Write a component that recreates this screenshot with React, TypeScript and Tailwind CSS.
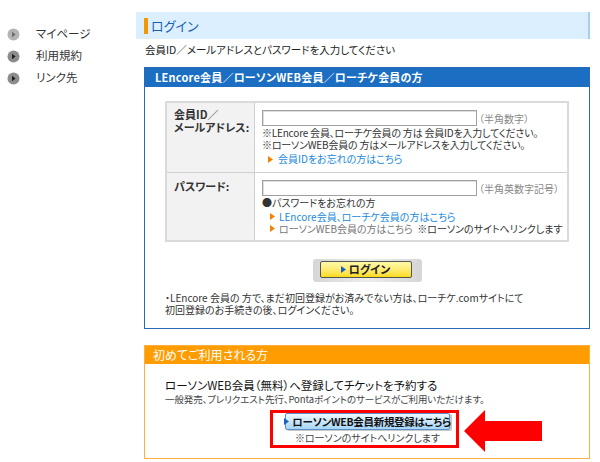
function Bullet({ light }: { light?: boolean }) {
  return (
    <svg width="13" height="13" viewBox="0 0 13 13">
      <circle cx="6.5" cy="6.5" r="6" fill={light ? '#b4b4b4' : '#8c8c8c'} />
      <path d="M5 3.8 L8.6 6.5 L5 9.2 Z" fill={light ? '#6a6a6a' : '#1e1e1e'} />
    </svg>
  );
}

function Tri({ color = '#f08300' }: { color?: string }) {
  return (
    <svg width="5" height="7" viewBox="0 0 5 7" className="shrink-0">
      <path d="M0 0 L5 3.5 L0 7 Z" fill={color} />
    </svg>
  );
}

function Sidebar() {
  const items = ['マイページ', '利用規約', 'リンク先'];
  return (
    <aside className="w-[136px] shrink-0 pl-[7px] pt-[23px]">
      {items.map((t, i) => (
        <div key={t} className="flex h-[22px] items-center gap-[16px] text-[11.5px] text-[#333]">
          <Bullet light={i === 0} />
          <span>{t}</span>
        </div>
      ))}
    </aside>
  );
}

function TextInput() {
  return <div className="h-[16px] w-[215px] border border-[#a0a0a0] bg-white shadow-[inset_1px_1px_0_#ddd]" />;
}

function LoginBox() {
  return (
    <section className="mt-[10px] border border-[#2a6ab8]">
      <div className="flex h-[19px] items-center bg-[#1b6ec2] pl-[10px] text-[11px] font-bold tracking-[0.2px] text-white">
        LEncore会員／ローソンWEB会員／ローチケ会員の方
      </div>
      <div className="px-[20px] pb-[12px] pt-[14px]">
        <div className="border-2 border-[#dadada]">
          <div className="grid h-[70px] grid-cols-[88px_1fr] border-b border-[#d0d0d0]">
            <div className="border-r border-[#d0d0d0] bg-[#f2f2f2] pl-[7px] pt-[5px] text-[11px] font-bold leading-[13px] text-[#333]">
              <div>会員ID／</div>
              <div>メールアドレス:</div>
            </div>
            <div className="pl-[7px] pt-[7px]">
              <div className="flex items-center">
                <TextInput />
                <span className="ml-[2px] text-[10px] text-[#888]">（半角数字）</span>
              </div>
              <div className="mt-[1px] text-[10px] leading-[12px] tracking-[-0.2px] text-[#333]">
                <div>※LEncore 会員、ローチケ会員の 方は 会員IDを入力してください。</div>
                <div>※ローソンWEB会員の 方はメールアドレスを入力してください。</div>
              </div>
              <div className="mt-[2px] flex items-center gap-[5px] pl-[6px] text-[10px] leading-[12px] text-[#1a8ae0]">
                <Tri />
                <span>会員IDをお忘れの方はこちら</span>
              </div>
            </div>
          </div>
          <div className="grid h-[67px] grid-cols-[88px_1fr]">
            <div className="border-r border-[#d0d0d0] bg-[#f2f2f2] pl-[7px] pt-[7px] text-[11px] font-bold leading-[12px] text-[#333]">
              パスワード:
            </div>
            <div className="pl-[7px] pt-[7px]">
              <div className="flex items-center">
                <TextInput />
                <span className="ml-[2px] text-[10px] text-[#888]">（半角英数字記号）</span>
              </div>
              <div className="mt-[1px] text-[10px] leading-[12px] text-[#333]">●パスワードをお忘れの方</div>
              <div className="mt-[2px] flex flex-col gap-[1px] pl-[8px] text-[10px] leading-[11px]">
                <div className="flex items-center gap-[4px] text-[#1a8ae0]">
                  <Tri />
                  <span>LEncore会員、ローチケ会員の方はこちら</span>
                </div>
                <div className="flex items-center gap-[4px] text-[#777]">
                  <Tri />
                  <span>
                    ローソンWEB会員の方はこちら&nbsp;&nbsp;<span className="text-[#333]">※ローソンのサイトへリンクします</span>
                  </span>
                </div>
              </div>
            </div>
          </div>
        </div>
        <div className="mt-[17px] flex justify-center">
          <div className="rounded-[3px] bg-gradient-to-r from-[#d6d6d6] via-[#ececec] to-[#d6d6d6] pb-[4px] pl-[7px] pr-[10px] pt-[2px]">
            <button className="flex h-[17px] w-[92px] items-center justify-center gap-[3px] rounded-[2px] border border-[#555] bg-gradient-to-b from-[#fff9a8] to-[#ffdc00] text-[11px] font-bold text-[#222]">
              <Tri color="#1a62c0" />
              ログイン
            </button>
          </div>
        </div>
        <div className="mt-[10px] text-[10px] leading-[12px] text-[#333]">
          <div>・LEncore 会員の 方で、まだ初回登録がお済みでない方は、ローチケ.comサイトにて</div>
          <div>初回登録のお手続きの後、ログインください。</div>
        </div>
      </div>
    </section>
  );
}

function FirstTimeBox() {
  return (
    <section className="mt-[16px] border border-[#ffb03c]">
      <div className="flex h-[18px] items-center bg-[#ff9c00] pl-[8px] text-[12px] text-white">初めてご利用される方</div>
      <div className="pb-[10px] pl-[20px] pr-[20px] pt-[14px]">
        <div className="text-[11.5px] leading-[14px] text-[#111]">ローソンWEB会員（無料）へ登録してチケットを予約する</div>
        <div className="mt-[1px] text-[9.5px] leading-[12px] tracking-[-0.1px] text-[#444]">
          一般発売、プレリクエスト先行、Pontaポイントのサービスがご利用いただけます。
        </div>
        <div className="mt-[5px] flex justify-center pr-[5px]">
          <div className="relative flex h-[38px] w-[189px] flex-col items-center border-[3px] border-[#ff0000] pl-[6px]">
            <button className="flex h-[17px] w-[165px] items-center justify-center gap-[3px] whitespace-nowrap rounded-[2px] border border-[#5b8fc7] bg-gradient-to-b from-[#eef8ff] to-[#a6d6f8] text-[10.5px] font-bold tracking-[-0.3px] text-[#111] shadow-[2px_1px_0_#c8c8c8]">
              <Tri color="#1a62c0" />
              ローソンWEB会員新規登録はこちら
            </button>
            <div className="mt-[2px] whitespace-nowrap text-[10px] leading-[12px] text-[#444]">※ローソンのサイトへリンクします</div>
            <svg width="78" height="42" viewBox="0 0 78 42" className="absolute left-[calc(100%+8px)] top-[-3px]">
              <path d="M0 21 L21 0 L21 11 L78 11 L78 31 L21 31 L21 42 Z" fill="#ff0000" />
            </svg>
          </div>
        </div>
      </div>
    </section>
  );
}

export default function App() {
  return (
    <div className="flex h-[462px] w-[600px] overflow-hidden bg-white font-['Noto_Sans_CJK_JP','Noto_Sans',sans-serif] text-[#333] [font-feature-settings:'palt']">
      <Sidebar />
      <main className="w-[454px] shrink-0 pt-[12px]">
        <div className="flex h-[27px] items-center border-r-2 border-[#a9cdee] bg-[#dcefff] pl-[8px]">
          <span className="h-[16px] w-[4px] bg-[#f39800]" />
          <span className="ml-[3px] text-[13px] text-[#1a5fb4]">ログイン</span>
        </div>
        <div className="pl-[8px]">
          <div className="mt-[4px] pl-[1px] text-[10.5px] leading-[14px] text-[#222]">
            会員ID／メールアドレスとパスワードを入力してください
          </div>
          <LoginBox />
          <FirstTimeBox />
        </div>
      </main>
    </div>
  );
}
